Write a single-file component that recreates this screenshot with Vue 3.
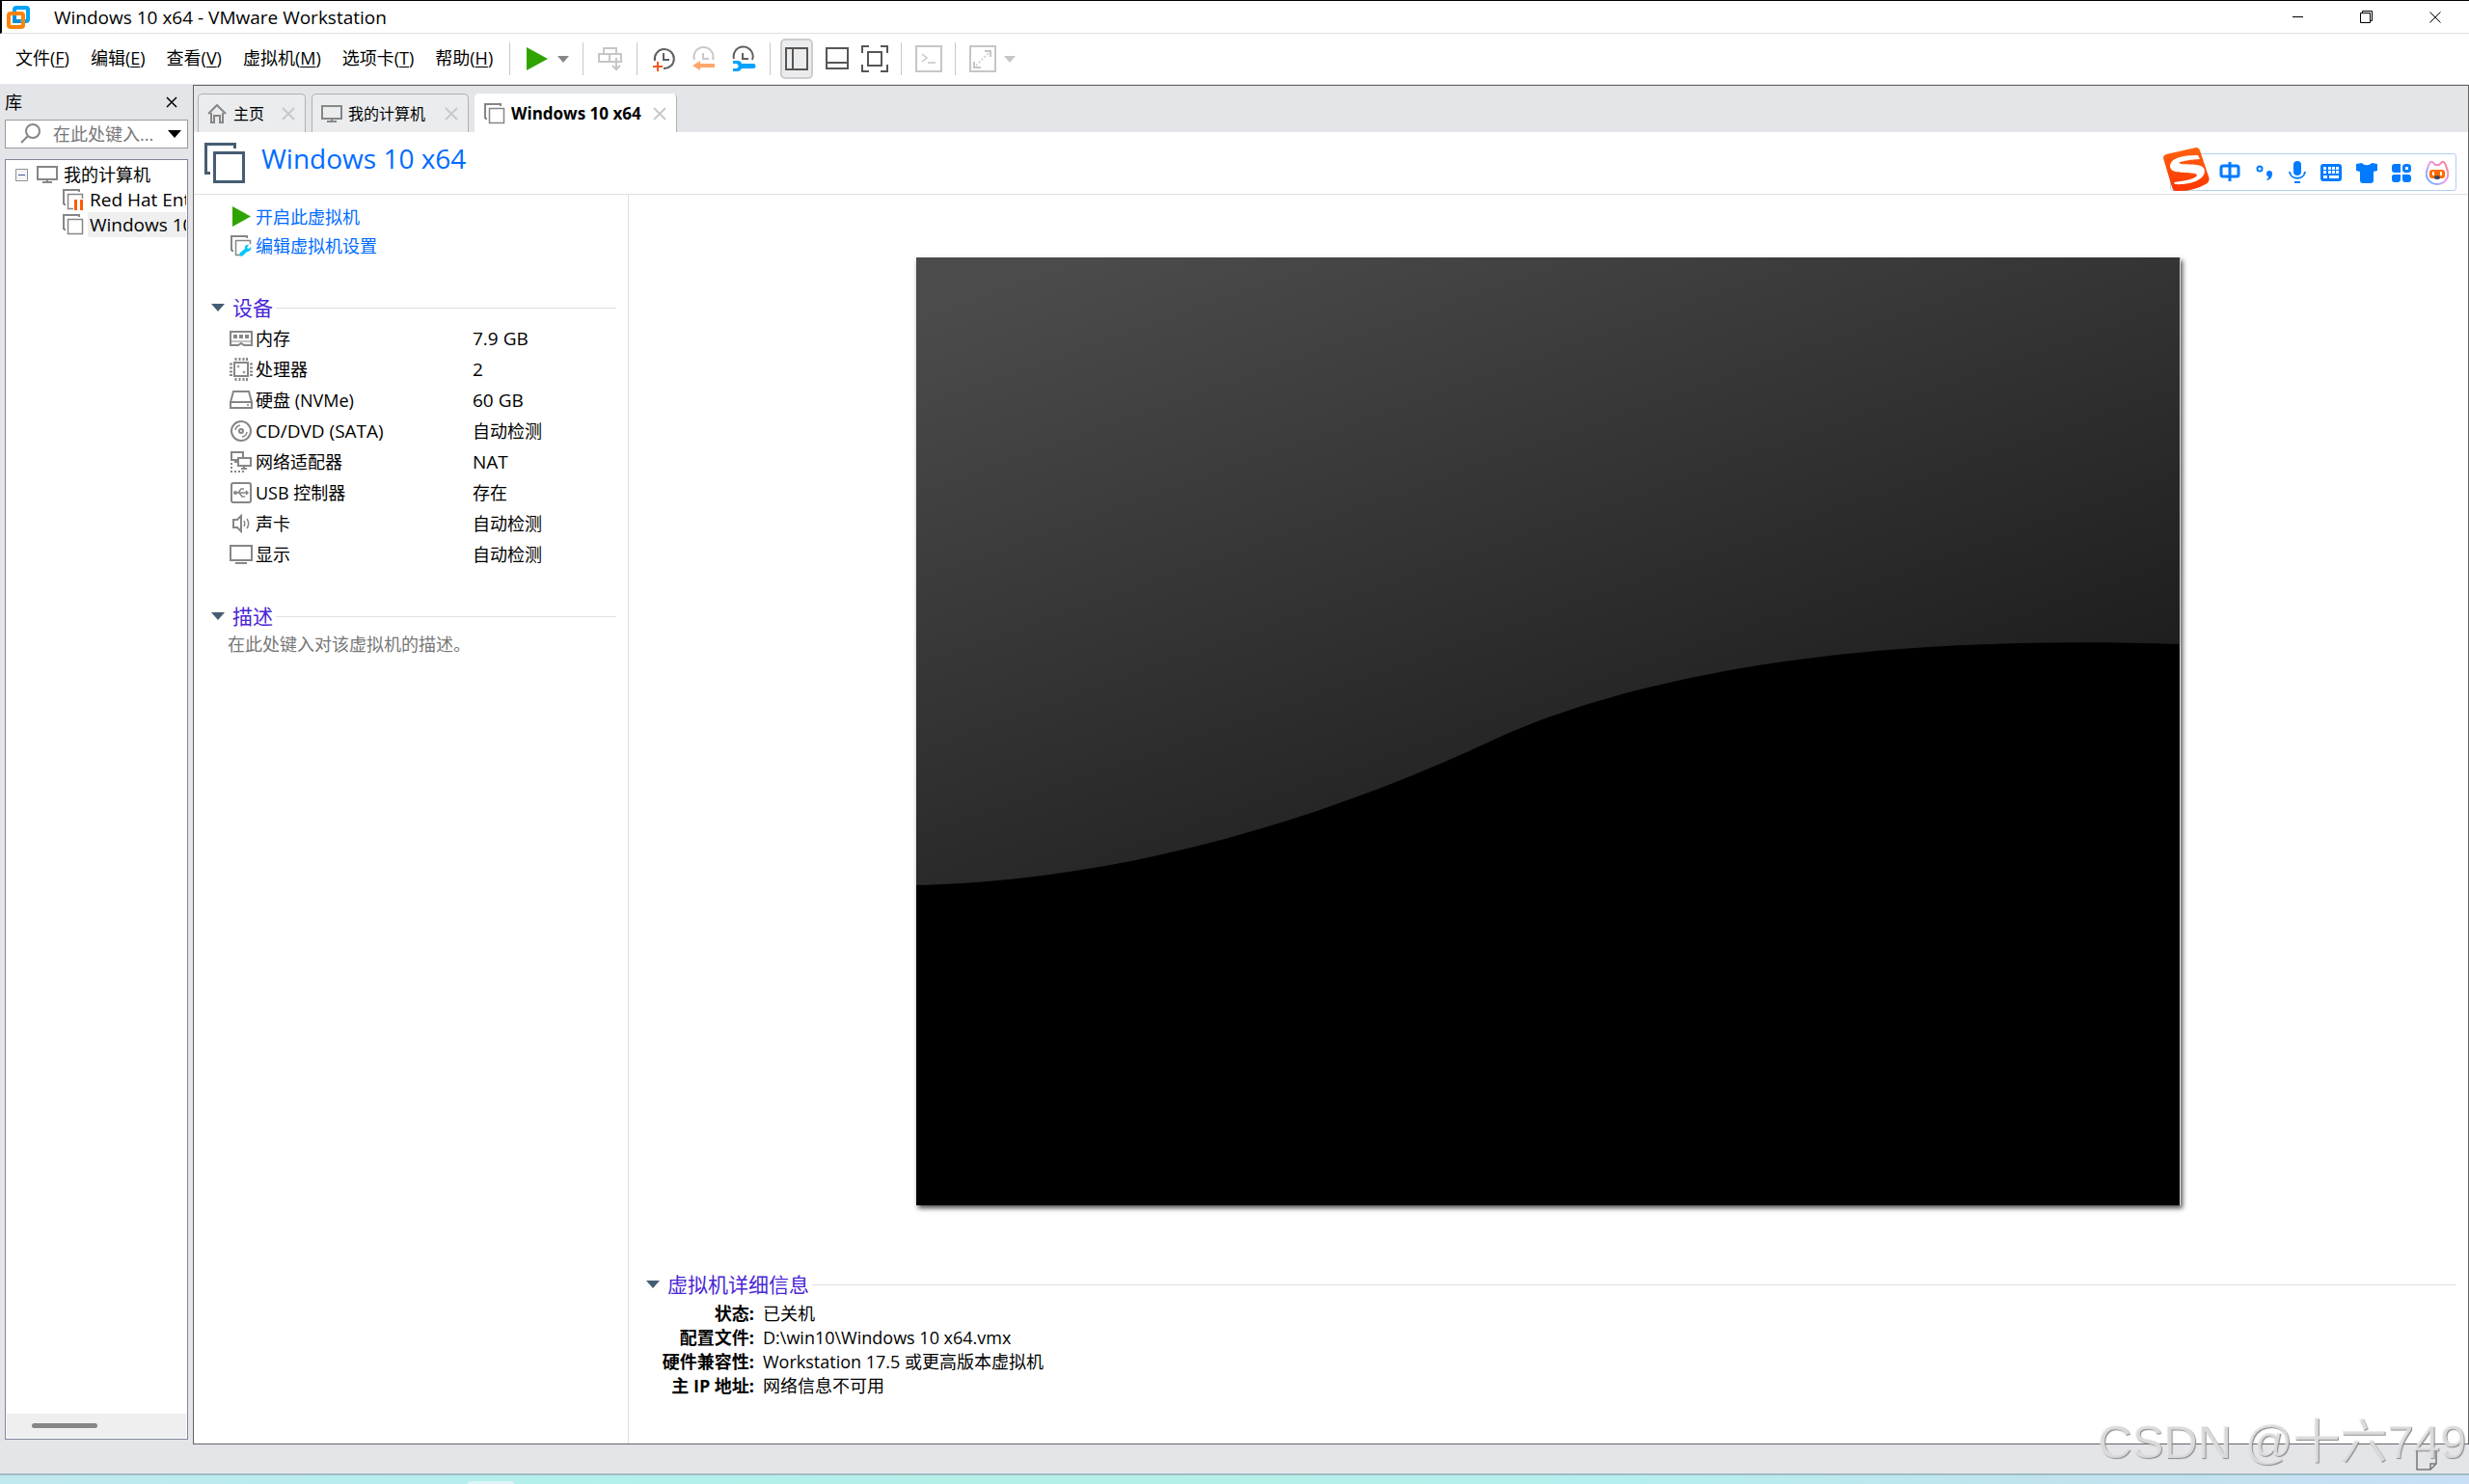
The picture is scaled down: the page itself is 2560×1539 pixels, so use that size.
<script setup>
const menus = [
  ['文件', 'F'], ['编辑', 'E'], ['查看', 'V'], ['虚拟机', 'M'], ['选项卡', 'T'], ['帮助', 'H'],
]
const devices = [
  { icon: 'memory', name: '内存', value: '7.9 GB' },
  { icon: 'cpu', name: '处理器', value: '2' },
  { icon: 'disk', name: '硬盘 (NVMe)', value: '60 GB' },
  { icon: 'cd', name: 'CD/DVD (SATA)', value: '自动检测' },
  { icon: 'net', name: '网络适配器', value: 'NAT' },
  { icon: 'usb', name: 'USB 控制器', value: '存在' },
  { icon: 'sound', name: '声卡', value: '自动检测' },
  { icon: 'display', name: '显示', value: '自动检测' },
]
const details = [
  ['状态:', '已关机'],
  ['配置文件:', 'D:\\win10\\Windows 10 x64.vmx'],
  ['硬件兼容性:', 'Workstation 17.5 或更高版本虚拟机'],
  ['主 IP 地址:', '网络信息不可用'],
]
// Latin-only strings are set one size up so they sit evenly beside the Chinese text
const isLatin = (text) => /^[\x20-\x7e]+$/.test(text)
</script>

<template>
  <div class="window">
    <svg class="defs" width="0" height="0" aria-hidden="true">
      <symbol id="monitor" viewBox="0 0 22 18">
        <path d="M1 1h20v13H1z" fill="none" stroke="#868686" stroke-width="2" />
        <path d="M10 14h2v3h-2zM6 16h10v2H6z" fill="#868686" />
      </symbol>
      <symbol id="vm" viewBox="0 0 22 22">
        <path d="M1 16V1h16v2M1 16h2" fill="none" stroke="#868686" stroke-width="2" />
        <path d="M5.500 5.500h15v15h-15z" fill="#fff" stroke="#868686" stroke-width="1.500" />
      </symbol>
      <symbol id="play" viewBox="0 0 20 22" preserveAspectRatio="none"><path d="M0 0l20 11L0 22z" fill="#2fa400" /></symbol>
      <symbol id="cross" viewBox="0 0 14 14"><path d="M1 1l12 12M13 1L1 13" fill="none" stroke="currentColor" stroke-width="2" /></symbol>
      <symbol id="caret" viewBox="0 0 14 8"><path d="M0 0h14L7 8z" fill="currentColor" /></symbol>
    </svg>

    <header class="titlebar">
      <svg class="logo" viewBox="0 0 24 24">
        <rect x="8" y="2" width="14" height="14" rx="2" fill="none" stroke="#00a4f8" stroke-width="4" />
        <rect x="2" y="8" width="15" height="14" rx="2" fill="none" stroke="#fd8204" stroke-width="4" />
        <path d="M8 10v6h6" fill="none" stroke="#0a8fd8" stroke-width="4" />
      </svg>
      <h1>Windows 10 x64 - VMware Workstation</h1>
      <div class="controls">
        <button aria-label="最小化"><svg width="14" height="14" viewBox="0 0 14 14"><path d="M1 6.500h11" stroke="#000" /></svg></button>
        <button aria-label="还原"><svg width="14" height="14" viewBox="0 0 14 14" fill="none" stroke="#000"><path d="M.5 2.500h10v10H.5zM2.500 2V.5h10v10h-2" /></svg></button>
        <button aria-label="关闭"><svg width="14" height="14" viewBox="0 0 14 14"><path d="M1.500 1.500l11 11M12.500 1.500l-11 11" stroke="#000" /></svg></button>
      </div>
    </header>

    <div class="menubar">
      <nav class="menus">
        <button v-for="m in menus" :key="m[1]">{{ m[0] }}(<u>{{ m[1] }}</u>)</button>
      </nav>
      <div class="group">
        <button class="tool" aria-label="开启"><svg width="22" height="24"><use href="#play" width="22" height="24" /></svg></button>
        <button class="drop" aria-label="电源菜单"><svg width="12" height="7"><use href="#caret" width="12" height="7" /></svg></button>
      </div>
      <div class="group send">
        <button class="tool" aria-label="发送"><svg width="26" height="28" viewBox="0 0 26 28" fill="none" stroke="#c6c6c6" stroke-width="2"><path d="M6 3h13v6H6zM1 9h11v8H1zM12 9h12v8H12M19 13v12M15 21l4 4 4-4" /></svg></button>
      </div>
      <div class="group clocks">
        <button class="tool" aria-label="拍摄快照"><svg width="26" height="28" viewBox="0 0 26 28" fill="none" stroke="#5f5f5f" stroke-width="2"><path d="M3 16a10 10 0 1 1 9 8M12 8v7h6" /><path d="M6 17v10M1 22h10" stroke="#f05a1e" /></svg></button>
        <button class="tool" aria-label="恢复快照"><svg width="26" height="28" viewBox="0 0 26 28" fill="none" stroke="#c9c9c9" stroke-width="2"><path d="M3 15a10 10 0 1 1 19 0M12 8v6h6" /><path d="M1 21l8-5v3h15v4H9v3z" fill="#ffa76c" stroke="none" /></svg></button>
        <button class="tool" aria-label="管理快照"><svg width="26" height="28" viewBox="0 0 26 28" fill="none" stroke="#5f5f5f" stroke-width="2"><path d="M3 14a10 10 0 1 1 19 1M12 8v6h6" /><path d="M2 16h5a4 4 0 0 1 4 3h12a2 2 0 0 1 0 5H11a5 5 0 0 1-4 3H2v-3h3a2 2 0 0 0 0-5H2z" fill="#00a2ff" stroke="none" /></svg></button>
      </div>
      <div class="group views">
        <button class="tool on" aria-label="显示库" aria-pressed="true"><svg width="24" height="24" viewBox="0 0 24 24" fill="none" stroke="#565656" stroke-width="2"><path d="M1 1h22v22H1zM8 1v22" /></svg></button>
        <button class="tool" aria-label="显示缩略图"><svg width="24" height="24" viewBox="0 0 24 24" fill="none" stroke="#565656" stroke-width="2"><path d="M1 1h22v21H1zM1 16h22" /></svg></button>
        <button class="tool" aria-label="全屏"><svg width="28" height="28" viewBox="0 0 28 28" fill="none" stroke="#565656" stroke-width="2"><path d="M1 8V1h7M20 1h7v7M27 20v7h-7M8 27H1v-7M7 7h14v14H7z" /></svg></button>
      </div>
      <div class="group">
        <button class="tool wide" aria-label="控制台"><svg width="28" height="28" viewBox="0 0 28 28" fill="none" stroke="#c6c6c6" stroke-width="2"><path d="M1 1h26v26H1z" /><path d="M7 9l5 4-5 4M13 18h8" stroke-width="1.500" /></svg></button>
      </div>
      <div class="group stretch">
        <button class="tool wide" aria-label="拉伸"><svg width="28" height="28" viewBox="0 0 28 28" fill="none" stroke="#c6c6c6" stroke-width="2"><path d="M1 1h26v26H1z" /><path d="M16 6h6v6M5 17v6h7" /><path d="M7 21L21 7" stroke-dasharray="2 2" stroke-width="1.500" /></svg></button>
        <button class="drop pale" aria-label="拉伸菜单"><svg width="12" height="7"><use href="#caret" width="12" height="7" /></svg></button>
      </div>
    </div>

    <div class="body">
      <aside class="library">
        <div class="lib-head"><span>库</span><button aria-label="关闭库"><svg width="12" height="12" viewBox="0 0 12 12"><path d="M1 1l10 10M11 1L1 11" stroke="#000" stroke-width="1.500" /></svg></button></div>
        <div class="search">
          <svg width="22" height="22" viewBox="0 0 22 22" fill="none" stroke="#868686" stroke-width="2"><circle cx="13" cy="8" r="7" /><path d="M8 13l-7 7" /></svg>
          <input type="text" placeholder="在此处键入..." aria-label="搜索">
          <button aria-label="筛选"><svg width="14" height="8"><use href="#caret" width="14" height="8" /></svg></button>
        </div>
        <div class="tree">
          <ul>
            <li class="root">
              <svg width="13" height="13" viewBox="0 0 13 13"><path d="M.5.5h12v12H.5z" fill="#f4f4f4" stroke="#919191" /><path d="M3 6.500h7" stroke="#3c57a8" /></svg>
              <svg width="22" height="18"><use href="#monitor" /></svg>
              <span>我的计算机</span>
            </li>
            <li class="leaf">
              <svg width="22" height="22" viewBox="0 0 22 22"><use href="#vm" /><path d="M11 10h11v12H11z" fill="#fff" /><path d="M12 11h3v11h-3zM18 11h3v11h-3z" fill="#ff5a00" /></svg>
              <span class="latin">Red Hat Enterprise</span>
            </li>
            <li class="leaf selected">
              <svg width="22" height="22"><use href="#vm" /></svg>
              <span class="latin">Windows 10 x64</span>
            </li>
          </ul>
          <div class="scroll"><div class="thumb"></div></div>
        </div>
      </aside>

      <main class="workspace">
        <div class="tabs">
          <div class="tab home">
            <svg width="20" height="20" viewBox="0 0 20 20" fill="none" stroke="#868686" stroke-width="2"><path d="M1 10L10 1l9 9M4 9v10h3v-7h6v7h3V9" /></svg>
            <span>主页</span>
            <button aria-label="关闭"><svg width="14" height="14"><use href="#cross" /></svg></button>
          </div>
          <div class="tab computer">
            <svg width="22" height="18"><use href="#monitor" /></svg>
            <span>我的计算机</span>
            <button aria-label="关闭"><svg width="14" height="14"><use href="#cross" /></svg></button>
          </div>
          <div class="tab active">
            <svg width="22" height="22"><use href="#vm" /></svg>
            <span>Windows 10 x64</span>
            <button aria-label="关闭"><svg width="14" height="14"><use href="#cross" /></svg></button>
          </div>
        </div>

        <div class="vm-head">
          <svg width="42" height="42" viewBox="0 0 42 42" fill="none" stroke="#455d74" stroke-width="3"><path d="M6 31.500H1.500v-30h30V6M10.500 10.500h30v30h-30z" /></svg>
          <h2>Windows 10 x64</h2>
        </div>

        <div class="content">
          <section class="info">
            <div class="actions">
              <a href="#"><svg width="24" height="22"><use href="#play" x="4" width="19" height="21" /></svg>开启此虚拟机</a>
              <a href="#"><svg width="24" height="22" viewBox="0 0 24 22"><use href="#vm" x="2" width="22" height="22" /><path d="M13 19L22 9h2v13H13z" fill="#fff" /><path d="M12 18l5-4c-1-3 2-5 4-4l-2 3 2 1 2-2c1 3-1 5-4 5l-4 4c-2 2-5-1-3-3z" fill="#00c8ff" /></svg>编辑虚拟机设置</a>
            </div>
            <div class="section-head"><svg width="14" height="8"><use href="#caret" width="14" height="8" /></svg><h3>设备</h3><i></i></div>
            <table class="devices">
              <tbody>
                <tr v-for="d in devices" :key="d.icon">
                  <th scope="row">
                    <div class="cell" :class="{ latin: isLatin(d.name) }">
                      <svg width="24" height="24" viewBox="0 0 24 24" fill="none" stroke="#868686" stroke-width="2">
                        <g v-if="d.icon === 'memory'"><path d="M1 5h22v14h-8l-3-2-3 2H1z" /><path d="M1 15h22" stroke-width="1" /><path d="M5 9h2v2H5zM11 9h2v2h-2zM17 9h2v2h-2z" /></g>
                        <g v-else-if="d.icon === 'cpu'"><path d="M5 5h14v14H5z" /><path d="M6.500 0v3M10.500 0v3M14.500 0v3M18 0v3M6.500 21v3M10.500 21v3M14.500 21v3M18 21v3M0 6.500h3M0 10.500h3M0 14.500h3M0 18h3M21 6.500h3M21 10.500h3M21 14.500h3M21 18h3" /><circle cx="9" cy="9" r="1" stroke-width="1" /><circle cx="15" cy="15" r="1" stroke-width="1" /></g>
                        <g v-else-if="d.icon === 'disk'"><path d="M1 14L4 3h16l3 11v6H1zM1 14h22" /><circle cx="19" cy="17" r="1" fill="#868686" stroke="none" /></g>
                        <g v-else-if="d.icon === 'cd'"><circle cx="12" cy="12" r="10" /><circle cx="12" cy="12" r="2" /><path d="M6 11a6 6 0 0 1 5-5M18 13a6 6 0 0 1-5 5" stroke-width="1.500" /></g>
                        <g v-else-if="d.icon === 'net'"><path d="M9 10H2V2h12v5M5 12h4M9 8h13v8H9zM15 16v3M12 19h6" /><path d="M2 13v9h14" stroke-dasharray="2 2" /></g>
                        <g v-else-if="d.icon === 'usb'"><rect x="2" y="2" width="20" height="20" rx="2" /><path d="M5 12h13M9 12l3-4h3M10 12l3 4h3M17 10l2 2-2 2" stroke-width="1.500" /><circle cx="6" cy="12" r="1" /></g>
                        <g v-else-if="d.icon === 'sound'"><path d="M4 8h4l4-4v16l-4-4H4z" /><path d="M15 9c1 2 1 4 0 6M18 7c2 3 2 7 0 10" stroke-width="1.500" /></g>
                        <g v-else><path d="M1 3h22v15H1z" /><path d="M6 21h12" /></g>
                      </svg>{{ d.name }}
                    </div>
                  </th>
                  <td :class="{ latin: isLatin(d.value) }">{{ d.value }}</td>
                </tr>
              </tbody>
            </table>
            <div class="section-head"><svg width="14" height="8"><use href="#caret" width="14" height="8" /></svg><h3>描述</h3><i></i></div>
            <p class="desc">在此处键入对该虚拟机的描述。</p>
          </section>

          <section class="preview">
            <div class="stage">
              <svg class="screen" viewBox="0 0 1310 983" preserveAspectRatio="none">
                <defs>
                  <linearGradient id="glare" gradientUnits="userSpaceOnUse" x1="70" y1="40" x2="341" y2="800">
                    <stop offset="0" stop-color="#4b4b4b" /><stop offset="1" stop-color="#1b1b1b" />
                  </linearGradient>
                </defs>
                <path d="M0 0h1310v983H0z" fill="#000" />
                <path d="M0 0H1310V401C1000 390 760 429 610 495C430 580 220 646 0 651z" fill="url(#glare)" />
              </svg>
            </div>
            <div class="details">
              <div class="section-head"><svg width="14" height="8"><use href="#caret" width="14" height="8" /></svg><h3>虚拟机详细信息</h3><i></i></div>
              <dl>
                <template v-for="d in details" :key="d[0]"><dt>{{ d[0] }}</dt><dd>{{ d[1] }}</dd></template>
              </dl>
            </div>
          </section>
        </div>
      </main>
    </div>

    <footer class="statusbar">
      <svg width="22" height="22" viewBox="0 0 22 22" fill="none" stroke="#777" stroke-width="1.500"><path d="M1 1h20v14l-6 6H1zM21 15h-6v6" /></svg>
    </footer>
    <div class="taskbar"><div class="peek"></div></div>

    <div class="ime">
      <svg class="sogou" width="48" height="46" viewBox="0 0 48 46">
        <defs><linearGradient id="flame" x1="0" y1="0" x2="0" y2="1"><stop offset="0" stop-color="#ff6410" /><stop offset="1" stop-color="#fd3400" /></linearGradient></defs>
        <path d="M3 7L34 0q3 0 4 3l9 27q2 5-3 8-14 8-31 7-3 0-4-4L0 11q0-3 3-4z" fill="url(#flame)" />
        <path d="M36 8C26 8 8 9 7 19c0 9 16 6 26 8 6 2-2 7-22 9l1 2c15 1 30-4 31-13 0-9-14-7-24-8-7-1 2-4 19-5z" fill="#fff" />
      </svg>
      <svg width="22" height="24" viewBox="0 0 22 24" fill="none" stroke="#007bff" stroke-width="3"><rect x="2" y="5" width="18" height="11" rx="2" /><path d="M11 1v20" /></svg>
      <svg width="20" height="24" viewBox="0 0 20 24"><circle cx="5" cy="8" r="2.500" fill="none" stroke="#007bff" stroke-width="2" /><path d="M12 13a3 3 0 0 1 6 0c0 4-2 6-5 7l-1-1c2-1 2-2 2-3-1 0-2-1-2-3z" fill="#007bff" /></svg>
      <svg width="18" height="24" viewBox="0 0 18 24"><rect x="5" y="0" width="8" height="15" rx="4" fill="#007bff" /><path d="M1 11c1 9 15 9 16 0M6 22h6" fill="none" stroke="#007bff" stroke-width="2" /></svg>
      <svg width="22" height="24" viewBox="0 0 22 24"><rect x="0" y="3" width="22" height="18" rx="3" fill="#007bff" /><path d="M3 6h3v3H3zM8 6h3v3H8zM12 6h3v3h-3zM16 6h3v3h-3zM3 10h3v3H3zM8 10h3v3H8zM12 10h3v3h-3zM16 10h3v3h-3zM3 15h4v3H3zM9 15h10v3H9z" fill="#fff" /></svg>
      <svg width="22" height="24" viewBox="0 0 22 24"><path d="M6 2c2 3 8 3 10 0l6 1v7l-4 1v9q0 3-3 3H7q-3 0-3-3v-9l-4-1V3z" fill="#007bff" /></svg>
      <svg width="20" height="24" viewBox="0 0 20 24"><path d="M3 3h6v9H3q-3 0-3-3V6q0-3 3-3zM0 16q0-2 2-2h7v5q0 3-3 3H3q-3 0-3-3zM11 14h6q3 0 3 3v2q0 3-3 3h-3q-3 0-3-3z" fill="#007bff" /><rect x="12.500" y="4.500" width="6" height="6" rx="2" fill="none" stroke="#007bff" stroke-width="3" /></svg>
      <svg width="24" height="26" viewBox="0 0 24 26">
        <defs><linearGradient id="face" x1="1" y1="0" x2="0" y2="1"><stop offset="0" stop-color="#ff7a8c" /><stop offset=".5" stop-color="#e79af0" /><stop offset="1" stop-color="#56b4ff" /></linearGradient></defs>
        <path d="M2 9C3 4 5 1 7 2l3 3h4l3-3c2-1 4 2 5 7 4 8-2 16-10 16S-2 17 2 9z" fill="#fff" stroke="url(#face)" stroke-width="2" />
        <rect x="4" y="10" width="16" height="9" rx="3" fill="#ff6a00" /><path d="M7 12h2v4H7zM15 12h2v4h-2z" fill="#fff" /><ellipse cx="12" cy="18" rx="3" ry="2" fill="#3a4660" />
      </svg>
    </div>
    <div class="watermark">CSDN @十六749</div>
  </div>
</template>

<style>
body { margin: 0; }
</style>

<style scoped>
.window { position: relative; display: flex; flex-direction: column; min-height: 100vh; box-sizing: border-box; background: #e4e5e9; color: #000; font: 18px/24px "Open Sans", "Noto Sans CJK SC", sans-serif; overflow: hidden; }
.defs { position: absolute; }
svg { display: block; flex: none; }
button { display: block; margin: 0; padding: 0; border: 0; background: none; color: inherit; font: inherit; white-space: nowrap; }
h1, h2, h3, p, ul, dl, dd { margin: 0; padding: 0; font-weight: 400; }
.latin { font-size: 19px; }

.titlebar { display: flex; align-items: center; height: 33px; border-top: 1px solid #000; border-bottom: 1px solid #e0e0e0; border-left: 2px solid #000; background: #fff; }
.logo { width: 24px; height: 24px; margin-left: 5px; }
.titlebar h1 { margin-left: 25px; font-size: 19px; }
.controls { display: flex; gap: 57px; margin-left: auto; padding-right: 28px; }

.menubar { display: flex; align-items: center; height: 52px; background: #fff; padding-left: 16px; }
.menus { display: flex; gap: 22px; width: 512px; padding-bottom: 2px; }
.menus u { text-underline-offset: 2px; text-decoration-thickness: 1px; }
.group { display: flex; align-items: center; height: 34px; border-left: 1px solid #c9c9c9; color: #868686; }
.group .tool { display: flex; align-items: center; justify-content: center; width: 22px; margin-left: 17px; }
.group .drop { margin: 0 14px 0 10px; }
.group .drop.pale { color: #c6c6c6; margin-left: 8px; }
.group.send .tool { width: 26px; margin: 0 14px 0 15px; }
.group.clocks .tool { width: 26px; margin-left: 15px; }
.group.clocks { padding-right: 14px; }
.group.views .tool { width: 28px; margin: 0 0 0 11px; }
.group.views { padding-right: 13px; }
.group.views .tool.on { box-sizing: border-box; width: 34px; height: 42px; margin-left: 10px; border: 2px solid #cdcdcd; border-radius: 5px; background: #ebecee; }
.group .tool.wide { width: 28px; margin: 0 13px 0 14px; }
.group.stretch .tool.wide { margin-right: 0; }

.body { display: flex; flex: 1; min-height: 0; }
.library { display: flex; flex-direction: column; width: 190px; flex: none; padding: 0 5px; }
.lib-head { display: flex; align-items: center; justify-content: space-between; height: 37px; padding-right: 11px; }
.search { box-sizing: border-box; display: flex; align-items: center; height: 30px; border: 1px solid #9a9a9a; background: #fff; padding: 0 6px 0 15px; }
.search input { flex: 1; min-width: 0; margin: 0 11px 0 12px; padding: 0; border: 0; outline: 0; background: none; font: inherit; }
.search input::placeholder { color: #777; opacity: 1; }
.tree { box-sizing: border-box; display: flex; flex-direction: column; flex: 1; margin: 11px 0 5px; padding: 2px 1px 1px; border: 1px solid #7f8799; background: #fff; }
.tree ul { list-style: none; flex: 1; overflow: hidden; }
.tree li { display: flex; align-items: center; height: 26px; white-space: nowrap; }
.root { gap: 9px; padding-left: 9px; }
.root span { margin-left: -3px; }
.leaf { gap: 4px; padding-left: 58px; }
.leaf span { flex: 1; overflow: hidden; line-height: 26px; padding-left: 2px; }
.leaf.selected span { background: #efefef; }
.scroll { height: 25px; background: #efefef; }
.thumb { width: 68px; height: 5px; margin: 10px 0 0 26px; border-radius: 3px; background: #868686; }

.workspace { display: flex; flex-direction: column; flex: 1; min-width: 0; margin-top: 1px; border: 1px solid #646464; background: #fff; }
.tabs { display: flex; align-items: flex-end; gap: 6px; height: 48px; padding-left: 4px; background: #e4e5e9; }
.tab { box-sizing: border-box; display: flex; align-items: center; height: 40px; padding: 0 10px 0 9px; border: 1px solid #b0b0b0; border-bottom: 0; border-radius: 5px 5px 0 0; background: #ebecee; font-size: 16px; color: #000; }
.tab span { margin-left: 6px; }
.tab button { margin-left: 20px; color: #c9c9c9; }
.tab.home span { margin-left: 7px; }
.tab.home button { margin-left: 18px; }
.tab.active { background: #fff; border-left-color: #fff; border-top-color: #fff; font-size: 17px; font-weight: 700; }
.tab.active button { margin-left: 12px; }

.vm-head { display: flex; height: 64px; border-bottom: 1px solid #e0e0e0; }
.vm-head svg { margin: 11px 0 0 11px; }
.vm-head h2 { margin: 9px 0 0 17px; font-size: 28px; line-height: 36px; color: #006cff; }

.content { display: flex; flex: 1; }
.info { box-sizing: border-box; width: 451px; flex: none; border-right: 1px solid #e0e0e0; padding-top: 8px; }
.actions { margin-bottom: 35px; padding-left: 36px; }
.actions a { display: flex; align-items: center; gap: 4px; height: 30px; color: #006cff; text-decoration: none; }
.section-head { display: flex; align-items: center; height: 28px; margin: 0 12px 0 18px; color: #455d74; }
.section-head h3 { margin: 0 3px 0 8px; font-size: 21px; line-height: 28px; color: #4a26d6; }
.section-head i { flex: 1; height: 1px; background: #e0e0e0; }
.devices { border-collapse: collapse; margin: 2px 0 34px 37px; }
.devices th, .devices td { height: 32px; padding: 0; text-align: left; font-weight: 400; }
.devices th { width: 252px; }
.cell { display: flex; align-items: center; gap: 3px; }
.desc { margin: 3px 0 0 35px; color: #777; }

.preview { display: flex; flex-direction: column; flex: 1; min-width: 0; }
.stage { display: flex; flex: 1; justify-content: center; align-items: center; padding-bottom: 3px; }
.screen { width: 68.7%; aspect-ratio: 1310 / 983; box-shadow: 2px 3px 5px rgba(0, 0, 0, .7); }
.details { padding-bottom: 47px; }
.details dl { display: grid; grid-template-columns: 130px 1fr; column-gap: 9px; margin-top: 4px; }
.details dt, .details dd { line-height: 25px; height: 25px; }
.details dt { text-align: right; font-weight: 700; white-space: nowrap; }

.statusbar { display: flex; justify-content: flex-end; height: 25px; padding: 5px 33px 0 0; border-bottom: 2px solid #a0bcc2; }
.taskbar { display: flex; height: 9px; background: linear-gradient(90deg, #c0e8ee, #b3efec 22%, #b4f0e6 45%, #b5efee 65%, #c0e4ee 82%, #c8dff5); }
.peek { width: 48px; height: 3px; margin: 6px 0 0 485px; border-radius: 3px 3px 0 0; background: #def4f7; }

.ime { position: absolute; top: 159px; right: 13px; box-sizing: border-box; display: flex; align-items: center; gap: 15px; height: 39px; padding: 0 7px 0 50px; border: 1px solid #b3d0ee; border-radius: 3px; background: #fff; }
.sogou { position: absolute; left: -8px; top: -7px; }
.watermark { position: absolute; right: 3px; bottom: 14px; font: 49px/60px "Liberation Sans", "Noto Sans CJK SC", sans-serif; color: rgba(232, 232, 232, .85); text-shadow: 1px 1px 1px #888; white-space: nowrap; }
</style>
